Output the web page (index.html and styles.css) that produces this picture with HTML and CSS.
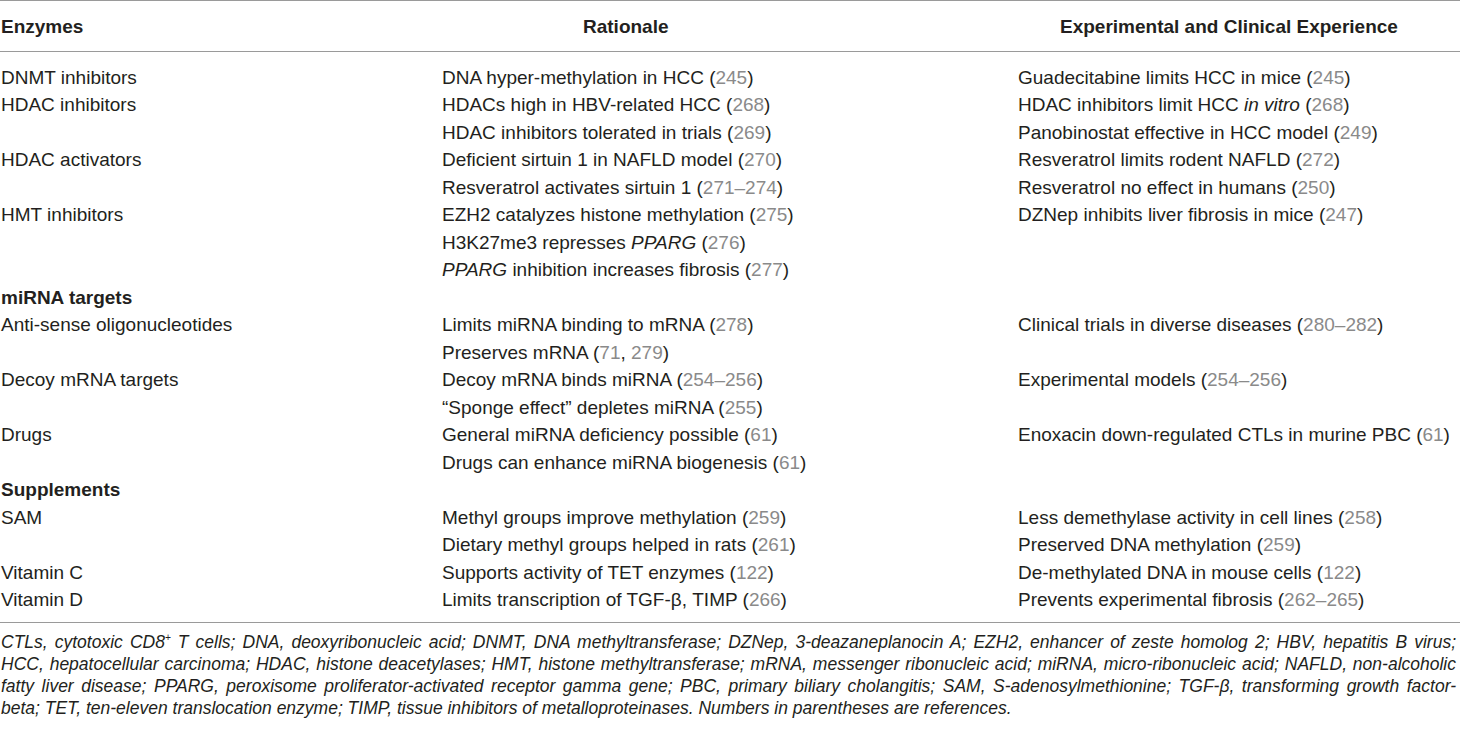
FILE: index.html
```html
<!DOCTYPE html>
<html lang="en">
<head>
    <meta charset="UTF-8">
    <title>Epigenetic Therapies</title>
    <link rel="stylesheet" href="styles.css">
</head>
<body>
    <table class="data">
        <colgroup>
            <col class="c1">
            <col class="c2">
            <col class="c3">
        </colgroup>
        <thead>
            <tr>
                <th>Enzymes</th>
                <th class="h2">Rationale</th>
                <th class="h3">Experimental and Clinical Experience</th>
            </tr>
        </thead>
        <tbody>
            <tr class="first">
                <td>DNMT inhibitors</td>
                <td>DNA hyper-methylation in HCC (<span class="ref">245</span>)</td>
                <td>Guadecitabine limits HCC in mice (<span class="ref">245</span>)</td>
            </tr>
            <tr>
                <td>HDAC inhibitors</td>
                <td>HDACs high in HBV-related HCC (<span class="ref">268</span>)</td>
                <td>HDAC inhibitors limit HCC <i>in vitro</i> (<span class="ref">268</span>)</td>
            </tr>
            <tr>
                <td></td>
                <td>HDAC inhibitors tolerated in trials (<span class="ref">269</span>)</td>
                <td>Panobinostat effective in HCC model (<span class="ref">249</span>)</td>
            </tr>
            <tr>
                <td>HDAC activators</td>
                <td>Deficient sirtuin 1 in NAFLD model (<span class="ref">270</span>)</td>
                <td>Resveratrol limits rodent NAFLD (<span class="ref">272</span>)</td>
            </tr>
            <tr>
                <td></td>
                <td>Resveratrol activates sirtuin 1 (<span class="ref">271–274</span>)</td>
                <td>Resveratrol no effect in humans (<span class="ref">250</span>)</td>
            </tr>
            <tr>
                <td>HMT inhibitors</td>
                <td>EZH2 catalyzes histone methylation (<span class="ref">275</span>)</td>
                <td>DZNep inhibits liver fibrosis in mice (<span class="ref">247</span>)</td>
            </tr>
            <tr>
                <td></td>
                <td>H3K27me3 represses <i>PPARG</i> (<span class="ref">276</span>)</td>
                <td></td>
            </tr>
            <tr>
                <td></td>
                <td><i>PPARG</i> inhibition increases fibrosis (<span class="ref">277</span>)</td>
                <td></td>
            </tr>
            <tr>
                <td class="group">miRNA targets</td>
                <td></td>
                <td></td>
            </tr>
            <tr>
                <td>Anti-sense oligonucleotides</td>
                <td>Limits miRNA binding to mRNA (<span class="ref">278</span>)</td>
                <td>Clinical trials in diverse diseases (<span class="ref">280–282</span>)</td>
            </tr>
            <tr>
                <td></td>
                <td>Preserves mRNA (<span class="ref">71</span>, <span class="ref">279</span>)</td>
                <td></td>
            </tr>
            <tr>
                <td>Decoy mRNA targets</td>
                <td>Decoy mRNA binds miRNA (<span class="ref">254–256</span>)</td>
                <td>Experimental models (<span class="ref">254–256</span>)</td>
            </tr>
            <tr>
                <td></td>
                <td>“Sponge effect” depletes miRNA (<span class="ref">255</span>)</td>
                <td></td>
            </tr>
            <tr>
                <td>Drugs</td>
                <td>General miRNA deficiency possible (<span class="ref">61</span>)</td>
                <td>Enoxacin down-regulated CTLs in murine PBC (<span class="ref">61</span>)</td>
            </tr>
            <tr>
                <td></td>
                <td>Drugs can enhance miRNA biogenesis (<span class="ref">61</span>)</td>
                <td></td>
            </tr>
            <tr>
                <td class="group">Supplements</td>
                <td></td>
                <td></td>
            </tr>
            <tr>
                <td>SAM</td>
                <td>Methyl groups improve methylation (<span class="ref">259</span>)</td>
                <td>Less demethylase activity in cell lines (<span class="ref">258</span>)</td>
            </tr>
            <tr>
                <td></td>
                <td>Dietary methyl groups helped in rats (<span class="ref">261</span>)</td>
                <td>Preserved DNA methylation (<span class="ref">259</span>)</td>
            </tr>
            <tr>
                <td>Vitamin C</td>
                <td>Supports activity of TET enzymes (<span class="ref">122</span>)</td>
                <td>De-methylated DNA in mouse cells (<span class="ref">122</span>)</td>
            </tr>
            <tr class="last">
                <td>Vitamin D</td>
                <td>Limits transcription of TGF-β, TIMP (<span class="ref">266</span>)</td>
                <td>Prevents experimental fibrosis (<span class="ref">262–265</span>)</td>
            </tr>
        </tbody>
    </table>
    <div class="notes">
        <div class="line">CTLs, cytotoxic CD8<sup>+</sup> T cells; DNA, deoxyribonucleic acid; DNMT, DNA methyltransferase; DZNep, 3-deazaneplanocin A; EZH2, enhancer of zeste homolog 2; HBV, hepatitis B virus;</div>
        <div class="line">HCC, hepatocellular carcinoma; HDAC, histone deacetylases; HMT, histone methyltransferase; mRNA, messenger ribonucleic acid; miRNA, micro-ribonucleic acid; NAFLD, non-alcoholic</div>
        <div class="line">fatty liver disease; PPARG, peroxisome proliferator-activated receptor gamma gene; PBC, primary biliary cholangitis; SAM, S-adenosylmethionine; TGF-β, transforming growth factor-</div>
        <div class="line end">beta; TET, ten-eleven translocation enzyme; TIMP, tissue inhibitors of metalloproteinases. Numbers in parentheses are references.</div>
    </div>
</body>
</html>
```

FILE: styles.css
```css
body {
    margin: 0;
    background: #fff;
    color: #231f20;
    font-family: "Liberation Sans", Arial, sans-serif;
}
.data {
    width: 1460px;
    border-collapse: collapse;
    table-layout: fixed;
    font-size: 19px;
    line-height: 27.5px;
}
.c1 {
    width: 442px;
}
.c2 {
    width: 576px;
}
.c3 {
    width: 442px;
}
.data th {
    text-align: left;
    font-weight: bold;
    padding: 12px 0 10px 1px;
    border-top: 1px solid #9a9a9a;
    border-bottom: 1px solid #9a9a9a;
    white-space: nowrap;
}
.data th.h2 {
    padding-left: 141px;
}
.data th.h3 {
    padding-left: 42px;
}
.data td {
    padding: 0;
    white-space: nowrap;
    vertical-align: top;
}
.data td:first-child {
    padding-left: 1px;
}
.data tr.first td {
    padding-top: 12px;
}
.data tr.last td {
    padding-bottom: 8px;
    border-bottom: 1px solid #9a9a9a;
}
.group {
    font-weight: bold;
}
.ref {
    color: #8a8a8a;
}
.notes {
    margin-top: 8px;
    font-size: 17.5px;
    line-height: 22px;
    font-style: italic;
    padding-left: 1px;
    padding-right: 4px;
}
.line {
    text-align: justify;
    text-align-last: justify;
    white-space: nowrap;
}
.line.end {
    text-align-last: left;
}
.notes sup {
    font-size: 10px;
    line-height: 0;
}
```
